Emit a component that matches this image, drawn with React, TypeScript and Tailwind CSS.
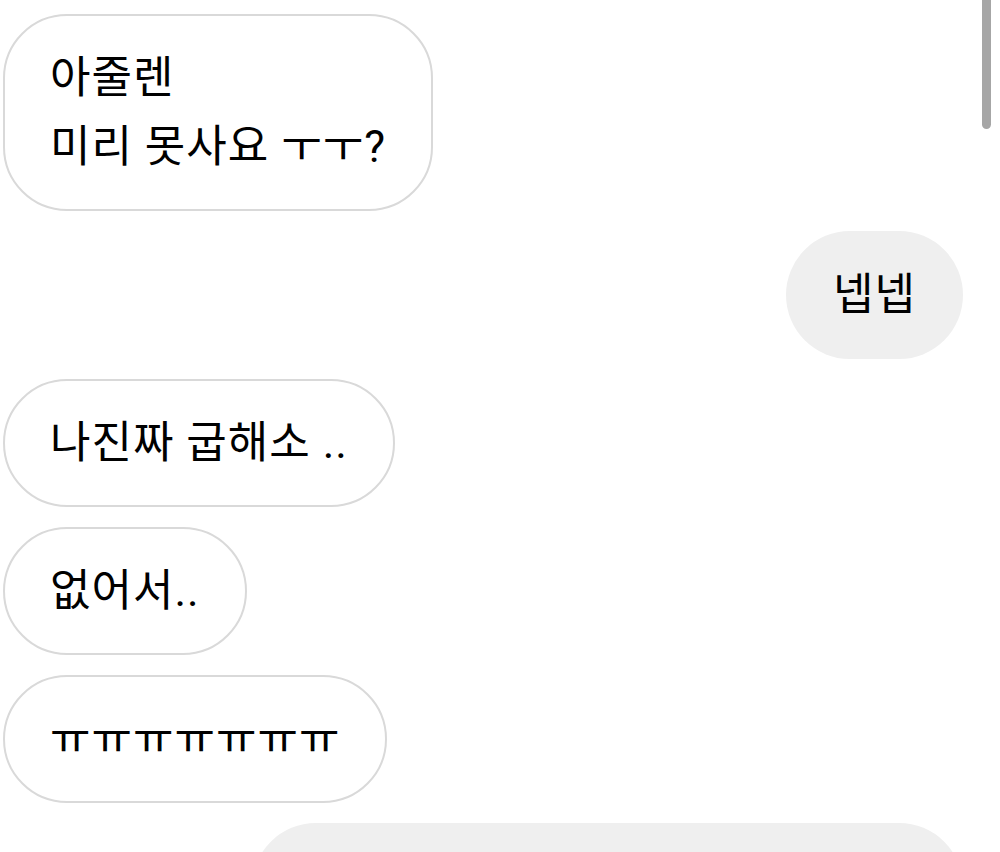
import React from "react";

const font = { fontFamily: 'Roboto, "Noto Sans CJK KR", sans-serif' };

function Left({ children }: { children: React.ReactNode }) {
  return (
    <div className="self-start rounded-[64px] border-2 border-[#d9d9d9] bg-white px-[45px] py-[27.5px] text-[44px] leading-[69px] tracking-[1px] text-black">
      {children}
    </div>
  );
}

function Right({ children, className = "" }: { children?: React.ReactNode; className?: string }) {
  return (
    <div className={"self-end rounded-[64px] border-2 border-transparent bg-[#efefef] px-[45px] py-[27.5px] text-[44px] leading-[69px] tracking-[1px] text-black " + className}>
      {children}
    </div>
  );
}

export default function App() {
  return (
    <div className="relative h-[852px] w-[1000px] overflow-hidden bg-white" style={font}>
      <div className="flex flex-col gap-5 pl-[3px] pr-[37px] pt-[14px]">
        <Left>
          <div>아줄렌</div>
          <div>미리 못사요 ㅜㅜ?</div>
        </Left>
        <Right>넵넵</Right>
        <Left>나진짜 굽해소 ..</Left>
        <Left>없어서..</Left>
        <Left>ㅠㅠㅠㅠㅠㅠㅠ</Left>
        <Right className="h-[128px] w-[711px]" />
      </div>
      <div className="absolute right-[9px] top-0 h-[129px] w-[9px] rounded-b-full bg-[#a6a6a6]" />
    </div>
  );
}
